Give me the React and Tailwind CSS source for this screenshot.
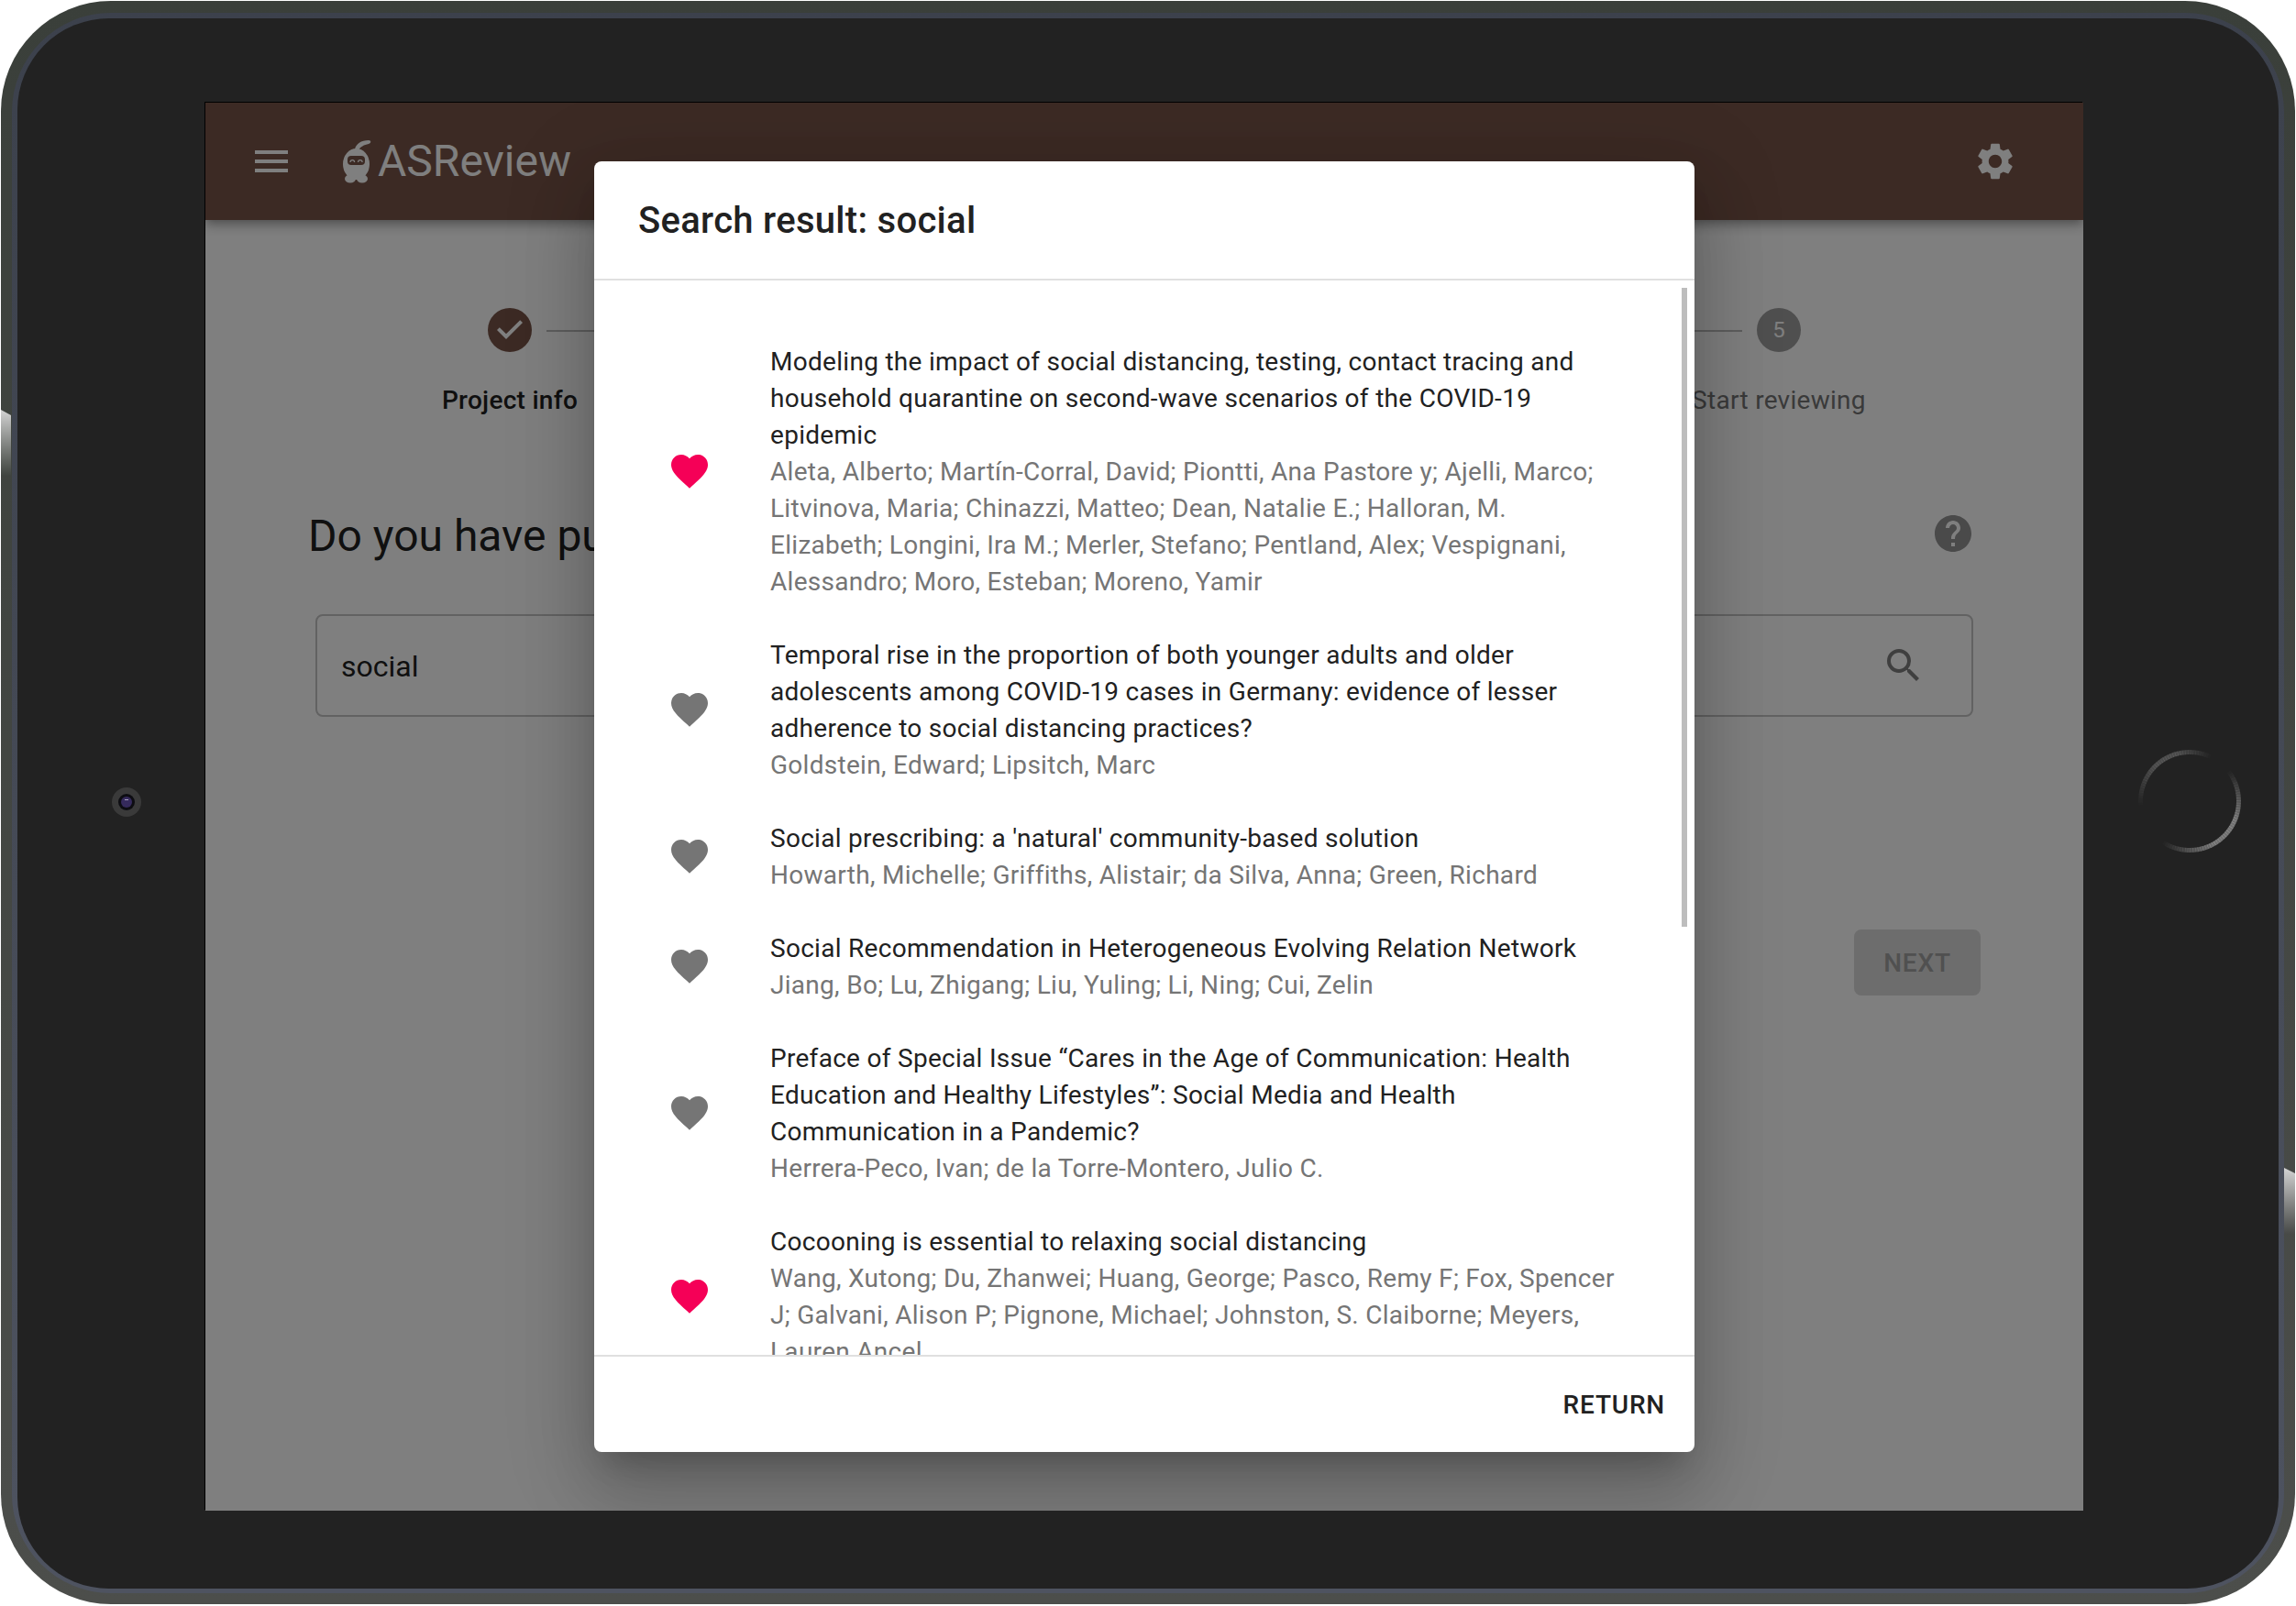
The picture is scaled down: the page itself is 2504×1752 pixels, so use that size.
import React from 'react';
import { MdMenu, MdSettings, MdFavorite, MdHelp, MdSearch } from 'react-icons/md';

const results = [
  {
    title: 'Modeling the impact of social distancing, testing, contact tracing and household quarantine on second-wave scenarios of the COVID-19 epidemic',
    authors: 'Aleta, Alberto; Martín-Corral, David; Piontti, Ana Pastore y; Ajelli, Marco; Litvinova, Maria; Chinazzi, Matteo; Dean, Natalie E.; Halloran, M. Elizabeth; Longini, Ira M.; Merler, Stefano; Pentland, Alex; Vespignani, Alessandro; Moro, Esteban; Moreno, Yamir',
    liked: true,
  },
  {
    title: 'Temporal rise in the proportion of both younger adults and older adolescents among COVID-19 cases in Germany: evidence of lesser adherence to social distancing practices?',
    authors: 'Goldstein, Edward; Lipsitch, Marc',
    liked: false,
  },
  {
    title: "Social prescribing: a 'natural' community-based solution",
    authors: 'Howarth, Michelle; Griffiths, Alistair; da Silva, Anna; Green, Richard',
    liked: false,
  },
  {
    title: 'Social Recommendation in Heterogeneous Evolving Relation Network',
    authors: 'Jiang, Bo; Lu, Zhigang; Liu, Yuling; Li, Ning; Cui, Zelin',
    liked: false,
  },
  {
    title: 'Preface of Special Issue “Cares in the Age of Communication: Health Education and Healthy Lifestyles”: Social Media and Health Communication in a Pandemic?',
    authors: 'Herrera-Peco, Ivan; de la Torre-Montero, Julio C.',
    liked: false,
  },
  {
    title: 'Cocooning is essential to relaxing social distancing',
    authors: 'Wang, Xutong; Du, Zhanwei; Huang, George; Pasco, Remy F; Fox, Spencer J; Galvani, Alison P; Pignone, Michael; Johnston, S. Claiborne; Meyers, Lauren Ancel',
    liked: true,
  },
];

// steps 2-4 sit behind the dialog, only their connector ends show
const steps = [
  { id: 1, label: 'Project info', done: true },
  { id: 2 },
  { id: 3 },
  { id: 4 },
  { id: 5, label: 'Start reviewing', number: '5' },
];

function Logo() {
  return (
    <svg width="32" height="48" viewBox="0 0 32 48" className="shrink-0">
      <path d="M14 11 C15 5 21 1 29 1 C32 1 32 4 29 5 C24 6 20 8 18 12 Z" fill="#fff" />
      <ellipse cx="15.5" cy="27" rx="14.5" ry="17" fill="#fff" />
      <ellipse cx="9" cy="43" rx="6" ry="4.5" fill="#fff" />
      <ellipse cx="22" cy="43" rx="6" ry="4.5" fill="#fff" />
      <rect x="6" y="18" width="19" height="10" rx="4" fill="#795548" />
      <path d="M9 25 a2.3 2.3 0 0 1 4.6 0 M17.5 25 a2.3 2.3 0 0 1 4.6 0" fill="none" stroke="#fff" strokeWidth="1.2" />
    </svg>
  );
}

// the home button ring fades out in two places, so draw it as small arc pieces
function HomeRing() {
  const pieces = [];
  const arcs = [
    { from: 50, to: 212, peak: 130, max: 0.36 },
    { from: 262, to: 385, peak: 330, max: 0.19 },
  ];
  arcs.forEach((arc) => {
    for (let a = arc.from; a < arc.to; a += 3) {
      const side = a < arc.peak ? arc.peak - arc.from : arc.to - arc.peak;
      const o = arc.max * Math.min(1, 1.3 * (1 - Math.abs(a - arc.peak) / side));
      const r = 53.5;
      const p = (d) => [60 + r * Math.sin((d * Math.PI) / 180), 60 - r * Math.cos((d * Math.PI) / 180)];
      const [x1, y1] = p(a);
      const [x2, y2] = p(a + 3.4);
      pieces.push(<path key={a} d={`M${x1} ${y1}L${x2} ${y2}`} stroke="#fff" strokeOpacity={o} strokeWidth="5" fill="none" />);
    }
  });
  return (
    <svg width="120" height="120" viewBox="0 0 120 120" className="absolute left-[2328px] top-[814px]">
      {pieces}
    </svg>
  );
}

function Camera() {
  return (
    <div className="absolute left-[122px] top-[859px] w-[32px] h-[32px] rounded-full bg-[#3a3a3a] flex items-center justify-center">
      <div className="w-[18px] h-[18px] rounded-full bg-[#0d0d12] flex items-center justify-center">
        <div className="relative w-[12px] h-[12px] rounded-full bg-[#352a5c]">
          <div className="absolute left-[4px] top-[3px] w-[4px] h-[1px] bg-[#a9a4c0]" />
        </div>
      </div>
    </div>
  );
}

function Stepper() {
  return (
    <div className="grid grid-cols-5 w-[1730px] mx-auto">
      {steps.map((step, i) => (
        <div key={step.id} className="relative flex flex-col items-center">
          {i > 0 && <div className="absolute left-[-133px] top-[24px] w-[266px] h-[2px] bg-[#bdbdbd]" />}
          {step.done ? (
            <div className="w-[48px] h-[48px] rounded-full bg-[#795548] flex items-center justify-center">
              <svg width="48" height="48" viewBox="0 0 24 24" fill="#fff">
                <path d="M10 17l-5-5 1.41-1.41L10 14.17l7.59-7.59L19 8l-9 9z" />
              </svg>
            </div>
          ) : (
            <div className="w-[48px] h-[48px] rounded-full bg-[#9e9e9e] flex items-center justify-center text-[24px] text-white">
              {step.number}
            </div>
          )}
          <div className={`mt-[33px] h-[40px] text-[28px] leading-[40px] tracking-[0.0103em] whitespace-nowrap ${step.done ? 'font-medium text-[#212121]' : 'text-[#757575]'}`}>
            {step.label}
          </div>
        </div>
      ))}
    </div>
  );
}

function ResultItem({ item }) {
  return (
    <div className="flex items-center pl-[80px] py-[20px]">
      <div className="w-[112px] shrink-0 pb-[2px]">
        <MdFavorite size={48} className={item.liked ? 'text-[#f50057]' : 'text-[#757575]'} />
      </div>
      <div className="w-[930px] text-[28px] leading-[40px] tracking-[0.0103em]">
        <div className="text-[#212121]">{item.title}</div>
        <div className="text-[#757575]">{item.authors}</div>
      </div>
    </div>
  );
}

export default function App() {
  return (
    <div className="relative w-[2504px] h-[1752px] bg-white pl-px pt-px font-[family-name:Roboto,sans-serif]">
      <div className="w-[2502px] h-[1749px] rounded-[120px] bg-gradient-to-b from-[#3a3f3a] to-[#4c4e4b] pl-[12px] pr-[12px] pt-[13px] pb-[12px]">
        <div className="w-full h-full rounded-[108px] bg-gradient-to-b from-[#3c414c] to-[#4e5360] px-[6px] pt-[6px] pb-[5px]">
          <div className="w-full h-full rounded-[100px] bg-[#222222] pl-[205px] pt-[92px]">
            <div className="relative w-[2048px] h-[1536px] bg-white overflow-hidden shadow-[-1px_-1px_0_#000]">
              <header className="h-[128px] bg-[#795548] flex items-center justify-between pl-[48px] pr-[72px] text-white shadow-[0_4px_8px_-2px_rgba(0,0,0,0.2),0_8px_10px_0_rgba(0,0,0,0.14),0_2px_20px_0_rgba(0,0,0,0.12)]">
                <div className="flex items-center">
                  <MdMenu size={48} />
                  <div className="ml-[53px] flex items-center">
                    <Logo />
                    <span className="ml-[7px] text-[48px] leading-[64px]">ASReview</span>
                  </div>
                </div>
                <MdSettings size={48} />
              </header>

              <main>
                <div className="pt-[96px]">
                  <Stepper />
                </div>
                <div className="w-[1824px] mx-auto mt-[93px]">
                  <div className="flex items-center justify-between h-[64px] pr-[6px]">
                    <h2 className="pt-[6px] text-[48px] leading-[64px] text-[#212121] whitespace-nowrap">Do you have pu</h2>
                    <MdHelp size={48} className="text-[#949494]" />
                  </div>
                  <div className="mx-[8px] mt-[56px] h-[112px] rounded-[8px] border-2 border-[#c4c4c4] flex items-center justify-between pl-[26px] pr-[50px]">
                    <span className="pt-[2px] text-[32px] text-[#212121]">social</span>
                    <MdSearch size={48} className="text-[#7e7e7e]" />
                  </div>
                  <div className="flex justify-end mt-[232px]">
                    <div className="w-[138px] h-[72px] pt-[2px] rounded-[8px] bg-[#dadada] flex items-center justify-center text-[28px] font-medium tracking-[0.02857em] text-[#a0a0a0]">
                      NEXT
                    </div>
                  </div>
                </div>
              </main>

              <div className="absolute inset-0 bg-black/50 flex items-center justify-center">
                <div className="w-[1200px] h-[1408px] bg-white rounded-[8px] flex flex-col shadow-[0_22px_30px_-14px_rgba(0,0,0,0.2),0_48px_76px_6px_rgba(0,0,0,0.14),0_18px_92px_16px_rgba(0,0,0,0.12)]">
                  <div className="h-[130px] shrink-0 border-b-2 border-[#e0e0e0] px-[48px] pt-[33px]">
                    <h1 className="text-[40px] leading-[64px] font-medium text-[#212121] tracking-[0.0075em]">Search result: social</h1>
                  </div>
                  <div className="relative flex-1 overflow-hidden pt-[49px]">
                    <div className="absolute right-[8px] top-[8px] w-[6px] h-[697px] bg-[#bdbdbd]" />
                    {results.map((item) => (
                      <ResultItem key={item.title} item={item} />
                    ))}
                  </div>
                  <div className="h-[106px] shrink-0 pt-[2px] border-t-2 border-[#e0e0e0] flex items-center justify-end pr-[32px]">
                    <span className="text-[28px] font-medium tracking-[0.02857em] text-[#212121]">RETURN</span>
                  </div>
                </div>
              </div>
            </div>
          </div>
        </div>
      </div>

      <div className="absolute left-px top-[447px] w-[11px] h-[72px] bg-gradient-to-b from-[#d4d4d4] to-[#3f443f] [clip-path:polygon(0_0,100%_6px,100%_100%,0_100%)]" />
      <div className="absolute left-[2491px] top-[1274px] w-[12px] h-[72px] bg-gradient-to-b from-[#d4d4d4] to-[#484a48] [clip-path:polygon(0_0,100%_6px,100%_100%,0_100%)]" />
      <Camera />
      <HomeRing />
    </div>
  );
}
